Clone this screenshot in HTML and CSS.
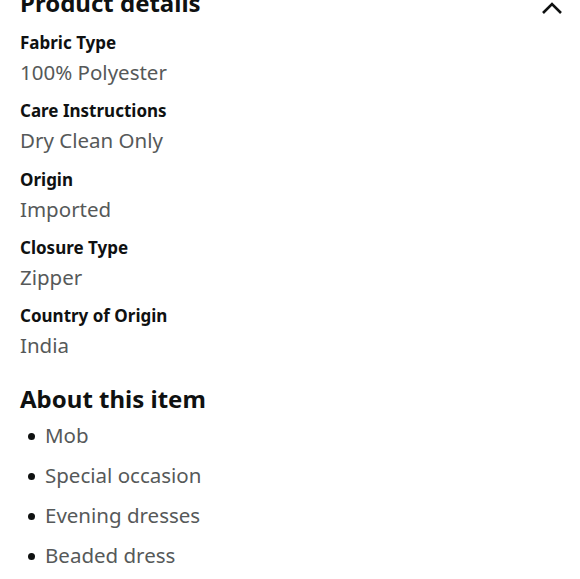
FILE: index.html
```html
<!DOCTYPE html>
<html>
<head>
<meta charset="utf-8">
<link rel="stylesheet" href="styles.css">
</head>
<body>
<div class="page">
  <div class="header">
    <h2 class="title">Product details</h2>
    <svg class="chev" width="22" height="14" viewBox="0 0 22 14"><path d="M2 12 L11 3 L20 12" fill="none" stroke="#0f1111" stroke-width="2.6"/></svg>
  </div>
  <div class="details">
    <div class="row"><div class="label">Fabric Type</div><div class="value">100% Polyester</div></div>
    <div class="row"><div class="label">Care Instructions</div><div class="value">Dry Clean Only</div></div>
    <div class="row"><div class="label">Origin</div><div class="value">Imported</div></div>
    <div class="row"><div class="label">Closure Type</div><div class="value">Zipper</div></div>
    <div class="row"><div class="label">Country of Origin</div><div class="value">India</div></div>
  </div>
  <h2 class="about">About this item</h2>
  <ul class="bullets">
    <li>Mob</li>
    <li>Special occasion</li>
    <li>Evening dresses</li>
    <li>Beaded dress</li>
  </ul>
</div>
</body>
</html>
```
FILE: styles.css
```css
html, body {
  margin: 0;
  padding: 0;
  background: #fff;
}
body {
  font-family: "Noto Sans", "Open Sans", sans-serif;
  color: #0f1111;
  overflow: hidden;
}
.page {
  padding: 0 17px 0 20px;
}
.header {
  display: flex;
  justify-content: space-between;
  align-items: flex-start;
  margin-top: -12px;
  height: 29px;
}
.title {
  margin: 0;
  font-size: 24px;
  font-weight: 700;
  line-height: 30px;
}
.chev {
  margin-top: 13px;
}
.details {
  margin-top: 12px;
}
.row {
  margin-bottom: 10.3px;
}
.label {
  font-size: 17px;
  font-weight: 700;
  line-height: 28px;
}
.value {
  font-size: 20.5px;
  line-height: 30px;
  color: #565959;
}
.about {
  margin: 0;
  margin-top: 23px;
  font-size: 24px;
  font-weight: 700;
  line-height: 32px;
}
.bullets {
  list-style: none;
  margin: 0;
  padding: 0 0 0 25px;
}
.bullets li {
  position: relative;
  font-size: 20.5px;
  line-height: 40px;
  color: #565959;
}
.bullets li::before {
  content: "";
  position: absolute;
  left: -17px;
  top: 18px;
  width: 7px;
  height: 7px;
  border-radius: 50%;
  background: #0f1111;
}
```
